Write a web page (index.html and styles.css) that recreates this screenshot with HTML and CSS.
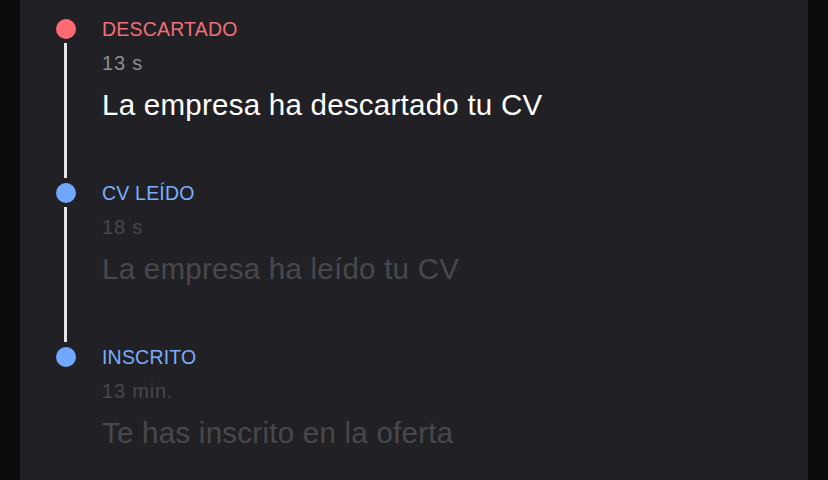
FILE: index.html
```html
<!DOCTYPE html>
<html lang="es">
<head>
<meta charset="utf-8">
<link rel="stylesheet" href="styles.css">
</head>
<body>
<div class="card">
  <div class="item">
    <div class="rail">
      <span class="dot dot-red"></span>
      <span class="line"></span>
    </div>
    <div class="content">
      <div class="title title-red">DESCARTADO</div>
      <div class="time">13 s</div>
      <div class="msg">La empresa ha descartado tu CV</div>
    </div>
  </div>
  <div class="item past">
    <div class="rail">
      <span class="dot dot-blue"></span>
      <span class="line"></span>
    </div>
    <div class="content">
      <div class="title title-blue">CV LEÍDO</div>
      <div class="time">18 s</div>
      <div class="msg">La empresa ha leído tu CV</div>
    </div>
  </div>
  <div class="item past last">
    <div class="rail">
      <span class="dot dot-blue"></span>
    </div>
    <div class="content">
      <div class="title title-blue">INSCRITO</div>
      <div class="time">13 min.</div>
      <div class="msg">Te has inscrito en la oferta</div>
    </div>
  </div>
</div>
</body>
</html>
```
FILE: styles.css
```css
html, body {
  margin: 0;
  padding: 0;
  height: 100%;
  background: #0c0c0c;
  font-family: "Liberation Sans", Arial, Helvetica, sans-serif;
  overflow: hidden;
}
.card {
  margin: 0 20px;
  height: 100%;
  background: #212125;
  padding: 17px 0 0 36px;
  box-sizing: border-box;
  display: flex;
  flex-direction: column;
}
.item {
  display: flex;
  gap: 26px;
  height: 164px;
  flex-shrink: 0;
}
.item.last {
  height: auto;
}
.rail {
  width: 20px;
  display: flex;
  flex-direction: column;
  align-items: flex-start;
}
.dot {
  width: 20px;
  height: 20px;
  border-radius: 50%;
  margin-top: 2px;
  flex-shrink: 0;
}
.dot-red { background: #ff6b72; }
.dot-blue { background: #70a8ff; }
.line {
  width: 3px;
  margin: 4px 0 3px 8px;
  flex: 1;
  background: #e4e4e8;
}
.content {
  display: flex;
  flex-direction: column;
}
.title {
  font-size: 19.5px;
  line-height: 24px;
  letter-spacing: 0.2px;
}
.title-red { color: #ef6e78; }
.title-blue { color: #7aaefc; }
.time {
  margin-top: 10px;
  font-size: 20px;
  line-height: 24px;
  letter-spacing: 0.8px;
  color: #8c8c91;
}
.msg {
  margin-top: 12px;
  font-size: 29.5px;
  line-height: 36px;
  letter-spacing: 0.25px;
  color: #ffffff;
}
.past .time { color: #47474b; }
.past .msg { color: #48484c; }
```
